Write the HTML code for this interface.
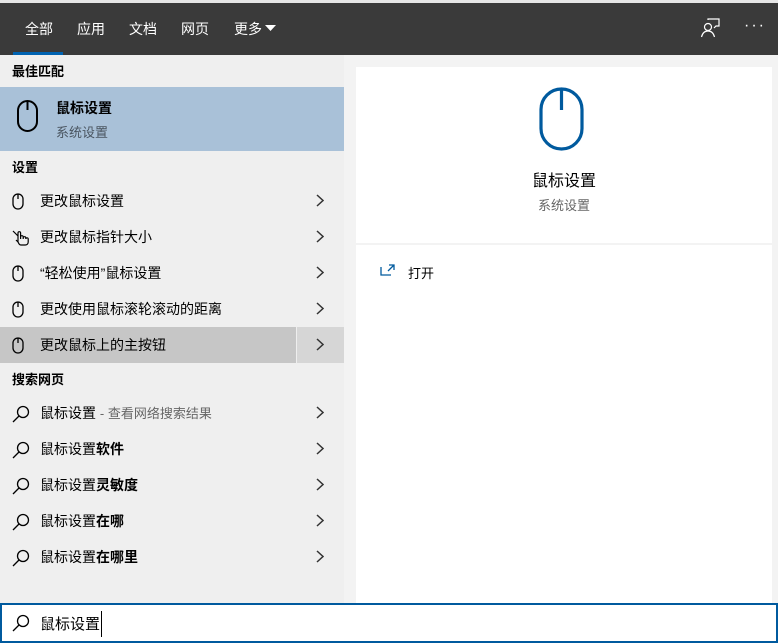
<!DOCTYPE html>
<html><head><meta charset="utf-8"><style>
*{margin:0;padding:0;box-sizing:border-box}
body{width:778px;height:643px;overflow:hidden;background:#f3f3f3;font-family:"Liberation Sans","Noto Sans CJK SC",sans-serif;position:relative;font-size:14px;color:#000}
.abs{position:absolute}
.top{left:0;top:0;width:778px;height:55px;background:#3a3a3a;border-top:3px solid #e6e6e6}
.tab{position:absolute;top:16px;color:#fff;font-size:14px}
.left{left:0;top:55px;width:344px;height:548px;background:#efefef}
.hdr{position:absolute;left:12px;font-size:13px;font-weight:bold}
.row{position:absolute;left:0;width:344px;height:36px}
.row .t{position:absolute;left:40px;top:8px;font-size:14px}
.row .ic{position:absolute;left:12px;top:10px}
.row .ch{position:absolute;left:316px;top:11px}
</style></head><body>
<div class="abs top">
 <div class="tab" style="left:25px">全部</div>
 <div class="abs" style="left:13px;top:49px;width:50px;height:3px;background:#0063b1"></div>
 <div class="tab" style="left:77px">应用</div>
 <div class="tab" style="left:129px">文档</div>
 <div class="tab" style="left:181px">网页</div>
 <div class="tab" style="left:234px">更多</div>
 <svg class="abs" style="left:265px;top:22px" width="12" height="7"><path d="M0 0H11L5.5 6Z" fill="#fff"/></svg>
 <svg class="abs" style="left:700px;top:15px" width="20" height="20" fill="none" stroke="#fff" stroke-width="1.2"><circle cx="8" cy="9" r="3.5"/><path d="M1.5 19c1-4 3.5-6 6.5-6s5.5 2 6.5 6M8 2V1h11v7h-3l-2 2"/></svg>
 <div class="abs" style="left:744px;top:14px;color:#fff;font-size:16px;letter-spacing:2px">···</div>
</div>
<div class="abs left">
 <div class="hdr" style="top:6px">最佳匹配</div>
 <div class="abs" style="left:0;top:32px;width:344px;height:64px;background:#a9c1d8">
  <svg class="abs" style="left:16px;top:12px" width="24" height="36" fill="none" stroke="#000" stroke-width="2"><rect x="2" y="2" width="19" height="30" rx="9.5"/><path d="M11.5 2V11"/></svg>
  <div class="abs" style="left:56px;top:11px;font-weight:bold;font-size:14px">鼠标设置</div>
  <div class="abs" style="left:56px;top:35px;font-size:13px;color:#4a5560">系统设置</div>
 </div>
 <div class="hdr" style="top:102px">设置</div>
</div>
<div class="row abs" style="top:183px"><svg class="ic" width="12" height="17" fill="none" stroke="#000" stroke-width="1.3"><rect x="1" y="1" width="10" height="15" rx="5"/><path d="M6 1V6"/></svg><div class="t">更改鼠标设置</div><svg class="ch" width="8" height="13" fill="none" stroke="#333" stroke-width="1.5"><path d="M1 1l6 5.5L1 12"/></svg></div>
<div class="row abs" style="top:219px"><svg class="ic" width="18" height="17" fill="none" stroke="#000" stroke-width="1.2"><path d="M1 2l5 5M6 13V4a1.3 1.3 0 0 1 2.6 0v6M8.6 8a1.3 1.3 0 0 1 2.6 0v2M11.2 9a1.3 1.3 0 0 1 2.6 0v1M13.8 10a1.2 1.2 0 0 1 2.4 0v3c0 2-1.5 3-3 3H9c-1.5 0-2-1-3-3L4 11"/></svg><div class="t">更改鼠标指针大小</div><svg class="ch" width="8" height="13" fill="none" stroke="#333" stroke-width="1.5"><path d="M1 1l6 5.5L1 12"/></svg></div>
<div class="row abs" style="top:255px"><svg class="ic" width="12" height="17" fill="none" stroke="#000" stroke-width="1.3"><rect x="1" y="1" width="10" height="15" rx="5"/><path d="M6 1V6"/></svg><div class="t">“轻松使用”鼠标设置</div><svg class="ch" width="8" height="13" fill="none" stroke="#333" stroke-width="1.5"><path d="M1 1l6 5.5L1 12"/></svg></div>
<div class="row abs" style="top:291px"><svg class="ic" width="12" height="17" fill="none" stroke="#000" stroke-width="1.3"><rect x="1" y="1" width="10" height="15" rx="5"/><path d="M6 1V6"/></svg><div class="t">更改使用鼠标滚轮滚动的距离</div><svg class="ch" width="8" height="13" fill="none" stroke="#333" stroke-width="1.5"><path d="M1 1l6 5.5L1 12"/></svg></div>
<div class="row abs" style="top:327px;background:#c6c6c6"><div class="abs" style="left:296px;top:0;width:48px;height:36px;background:#d6d6d6;border-left:1px solid #eee"></div><svg class="ic" width="12" height="17" fill="none" stroke="#000" stroke-width="1.3"><rect x="1" y="1" width="10" height="15" rx="5"/><path d="M6 1V6"/></svg><div class="t">更改鼠标上的主按钮</div><svg class="ch" width="8" height="13" fill="none" stroke="#333" stroke-width="1.5"><path d="M1 1l6 5.5L1 12"/></svg></div>
<div class="hdr abs" style="top:369px">搜索网页</div>
<div class="row abs" style="top:395px"><svg class="ic" width="18" height="18" fill="none" stroke="#000" stroke-width="1.3"><circle cx="11" cy="7" r="5.5"/><path d="M7 11L1 17"/></svg><div class="t">鼠标设置 <span style="color:#666;font-size:13px">- 查看网络搜索结果</span></div><svg class="ch" width="8" height="13" fill="none" stroke="#333" stroke-width="1.5"><path d="M1 1l6 5.5L1 12"/></svg></div>
<div class="row abs" style="top:431px"><svg class="ic" width="18" height="18" fill="none" stroke="#000" stroke-width="1.3"><circle cx="11" cy="7" r="5.5"/><path d="M7 11L1 17"/></svg><div class="t">鼠标设置<b>软件</b></div><svg class="ch" width="8" height="13" fill="none" stroke="#333" stroke-width="1.5"><path d="M1 1l6 5.5L1 12"/></svg></div>
<div class="row abs" style="top:467px"><svg class="ic" width="18" height="18" fill="none" stroke="#000" stroke-width="1.3"><circle cx="11" cy="7" r="5.5"/><path d="M7 11L1 17"/></svg><div class="t">鼠标设置<b>灵敏度</b></div><svg class="ch" width="8" height="13" fill="none" stroke="#333" stroke-width="1.5"><path d="M1 1l6 5.5L1 12"/></svg></div>
<div class="row abs" style="top:503px"><svg class="ic" width="18" height="18" fill="none" stroke="#000" stroke-width="1.3"><circle cx="11" cy="7" r="5.5"/><path d="M7 11L1 17"/></svg><div class="t">鼠标设置<b>在哪</b></div><svg class="ch" width="8" height="13" fill="none" stroke="#333" stroke-width="1.5"><path d="M1 1l6 5.5L1 12"/></svg></div>
<div class="row abs" style="top:539px"><svg class="ic" width="18" height="18" fill="none" stroke="#000" stroke-width="1.3"><circle cx="11" cy="7" r="5.5"/><path d="M7 11L1 17"/></svg><div class="t">鼠标设置<b>在哪里</b></div><svg class="ch" width="8" height="13" fill="none" stroke="#333" stroke-width="1.5"><path d="M1 1l6 5.5L1 12"/></svg></div>
<div class="abs" style="left:356px;top:67px;width:416px;height:176px;background:#fff">
 <svg class="abs" style="left:183px;top:20px" width="46" height="64" fill="none" stroke="#005a9e" stroke-width="3.2"><rect x="2" y="2" width="41" height="60" rx="20.5"/><path d="M22.5 2V23"/></svg>
 <div class="abs" style="left:0;width:416px;top:100px;text-align:center;font-size:16px">鼠标设置</div>
 <div class="abs" style="left:0;width:416px;top:128px;text-align:center;font-size:13px;color:#666">系统设置</div>
</div>
<div class="abs" style="left:356px;top:245px;width:416px;height:358px;background:#fff">
 <svg class="abs" style="left:24px;top:19px" width="15" height="12" fill="none" stroke="#005a9e" stroke-width="1.3"><path d="M1 3v8h10M9 1h5v5M14 1L8 7"/></svg>
 <div class="abs" style="left:52px;top:18px;font-size:13px">打开</div>
</div>
<div class="abs" style="left:0;top:603px;width:778px;height:40px;background:#fff;border:2px solid #005a9e">
 <svg class="abs" style="left:10px;top:9px" width="18" height="18" fill="none" stroke="#000" stroke-width="1.3"><circle cx="11" cy="7" r="5.5"/><path d="M7 11L1 17"/></svg>
 <div class="abs" style="left:38px;top:8px;font-size:15px">鼠标设置</div>
 <div class="abs" style="left:99px;top:6px;width:1px;height:26px;background:#000"></div>
</div>
</body></html>
